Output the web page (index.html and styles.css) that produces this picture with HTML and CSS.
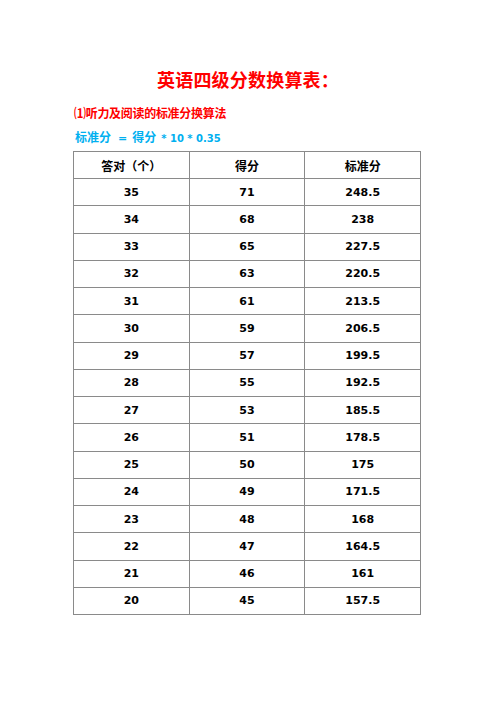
FILE: index.html
```html
<!DOCTYPE html>
<html lang="zh-CN">
<head>
<meta charset="utf-8">
<title>英语四级分数换算表</title>
<link rel="stylesheet" href="styles.css">
</head>
<body>
<div class="page">
  <h1 class="title">英语四级分数换算表：</h1>
  <p class="subtitle">⑴听力及阅读的标准分换算法</p>
  <p class="formula"><span class="cjk">标准分</span><span class="eq">=</span><span class="cjk">得分</span><span class="lat">* 10 * 0.35</span></p>
  <table class="score">
    <thead>
      <tr><th>答对（个）</th><th>得分</th><th>标准分</th></tr>
    </thead>
    <tbody>
      <tr><td>35</td><td>71</td><td>248.5</td></tr>
      <tr><td>34</td><td>68</td><td>238</td></tr>
      <tr><td>33</td><td>65</td><td>227.5</td></tr>
      <tr><td>32</td><td>63</td><td>220.5</td></tr>
      <tr><td>31</td><td>61</td><td>213.5</td></tr>
      <tr><td>30</td><td>59</td><td>206.5</td></tr>
      <tr><td>29</td><td>57</td><td>199.5</td></tr>
      <tr><td>28</td><td>55</td><td>192.5</td></tr>
      <tr><td>27</td><td>53</td><td>185.5</td></tr>
      <tr><td>26</td><td>51</td><td>178.5</td></tr>
      <tr><td>25</td><td>50</td><td>175</td></tr>
      <tr><td>24</td><td>49</td><td>171.5</td></tr>
      <tr><td>23</td><td>48</td><td>168</td></tr>
      <tr><td>22</td><td>47</td><td>164.5</td></tr>
      <tr><td>21</td><td>46</td><td>161</td></tr>
      <tr><td>20</td><td>45</td><td>157.5</td></tr>
    </tbody>
  </table>
</div>
</body>
</html>
```

FILE: styles.css
```css
html, body {
  margin: 0;
  padding: 0;
  background: #ffffff;
}

.page {
  width: 496px;
  padding: 67px 0 0 73px;
  box-sizing: border-box;
  font-family: "Noto Sans CJK SC", "DejaVu Sans", sans-serif;
}

.title {
  margin: 0 0 10px -73px;
  width: 496px;
  text-align: center;
  font-size: 18px;
  line-height: 24px;
  font-weight: bold;
  color: #ff0000;
  letter-spacing: 0.2px;
}

.subtitle {
  margin: 0 0 0 1px;
  font-size: 12px;
  line-height: 24px;
  font-weight: bold;
  color: #ff0000;
  letter-spacing: -0.3px;
}

.formula {
  margin: 0 0 0 2px;
  font-size: 12px;
  line-height: 24px;
  font-weight: bold;
  color: #00b0f0;
  white-space: pre;
}

.formula .eq {
  font-family: "DejaVu Sans", sans-serif;
  font-size: 11px;
  margin: 0 5px 0 7px;
}

.formula .lat {
  font-family: "DejaVu Sans", sans-serif;
  font-size: 10px;
  margin-left: 5px;
}

.score {
  border-collapse: collapse;
  width: 348px;
  table-layout: fixed;
}

.score th,
.score td {
  border: 1px solid #8a8a8a;
  padding: 0;
  text-align: center;
  font-weight: bold;
  color: #000000;
}

.score th {
  height: 26px;
  font-family: "Noto Sans CJK SC", sans-serif;
  font-size: 12px;
}

.score td {
  height: 26.25px;
  font-family: "DejaVu Sans", sans-serif;
  font-size: 11px;
}
```
